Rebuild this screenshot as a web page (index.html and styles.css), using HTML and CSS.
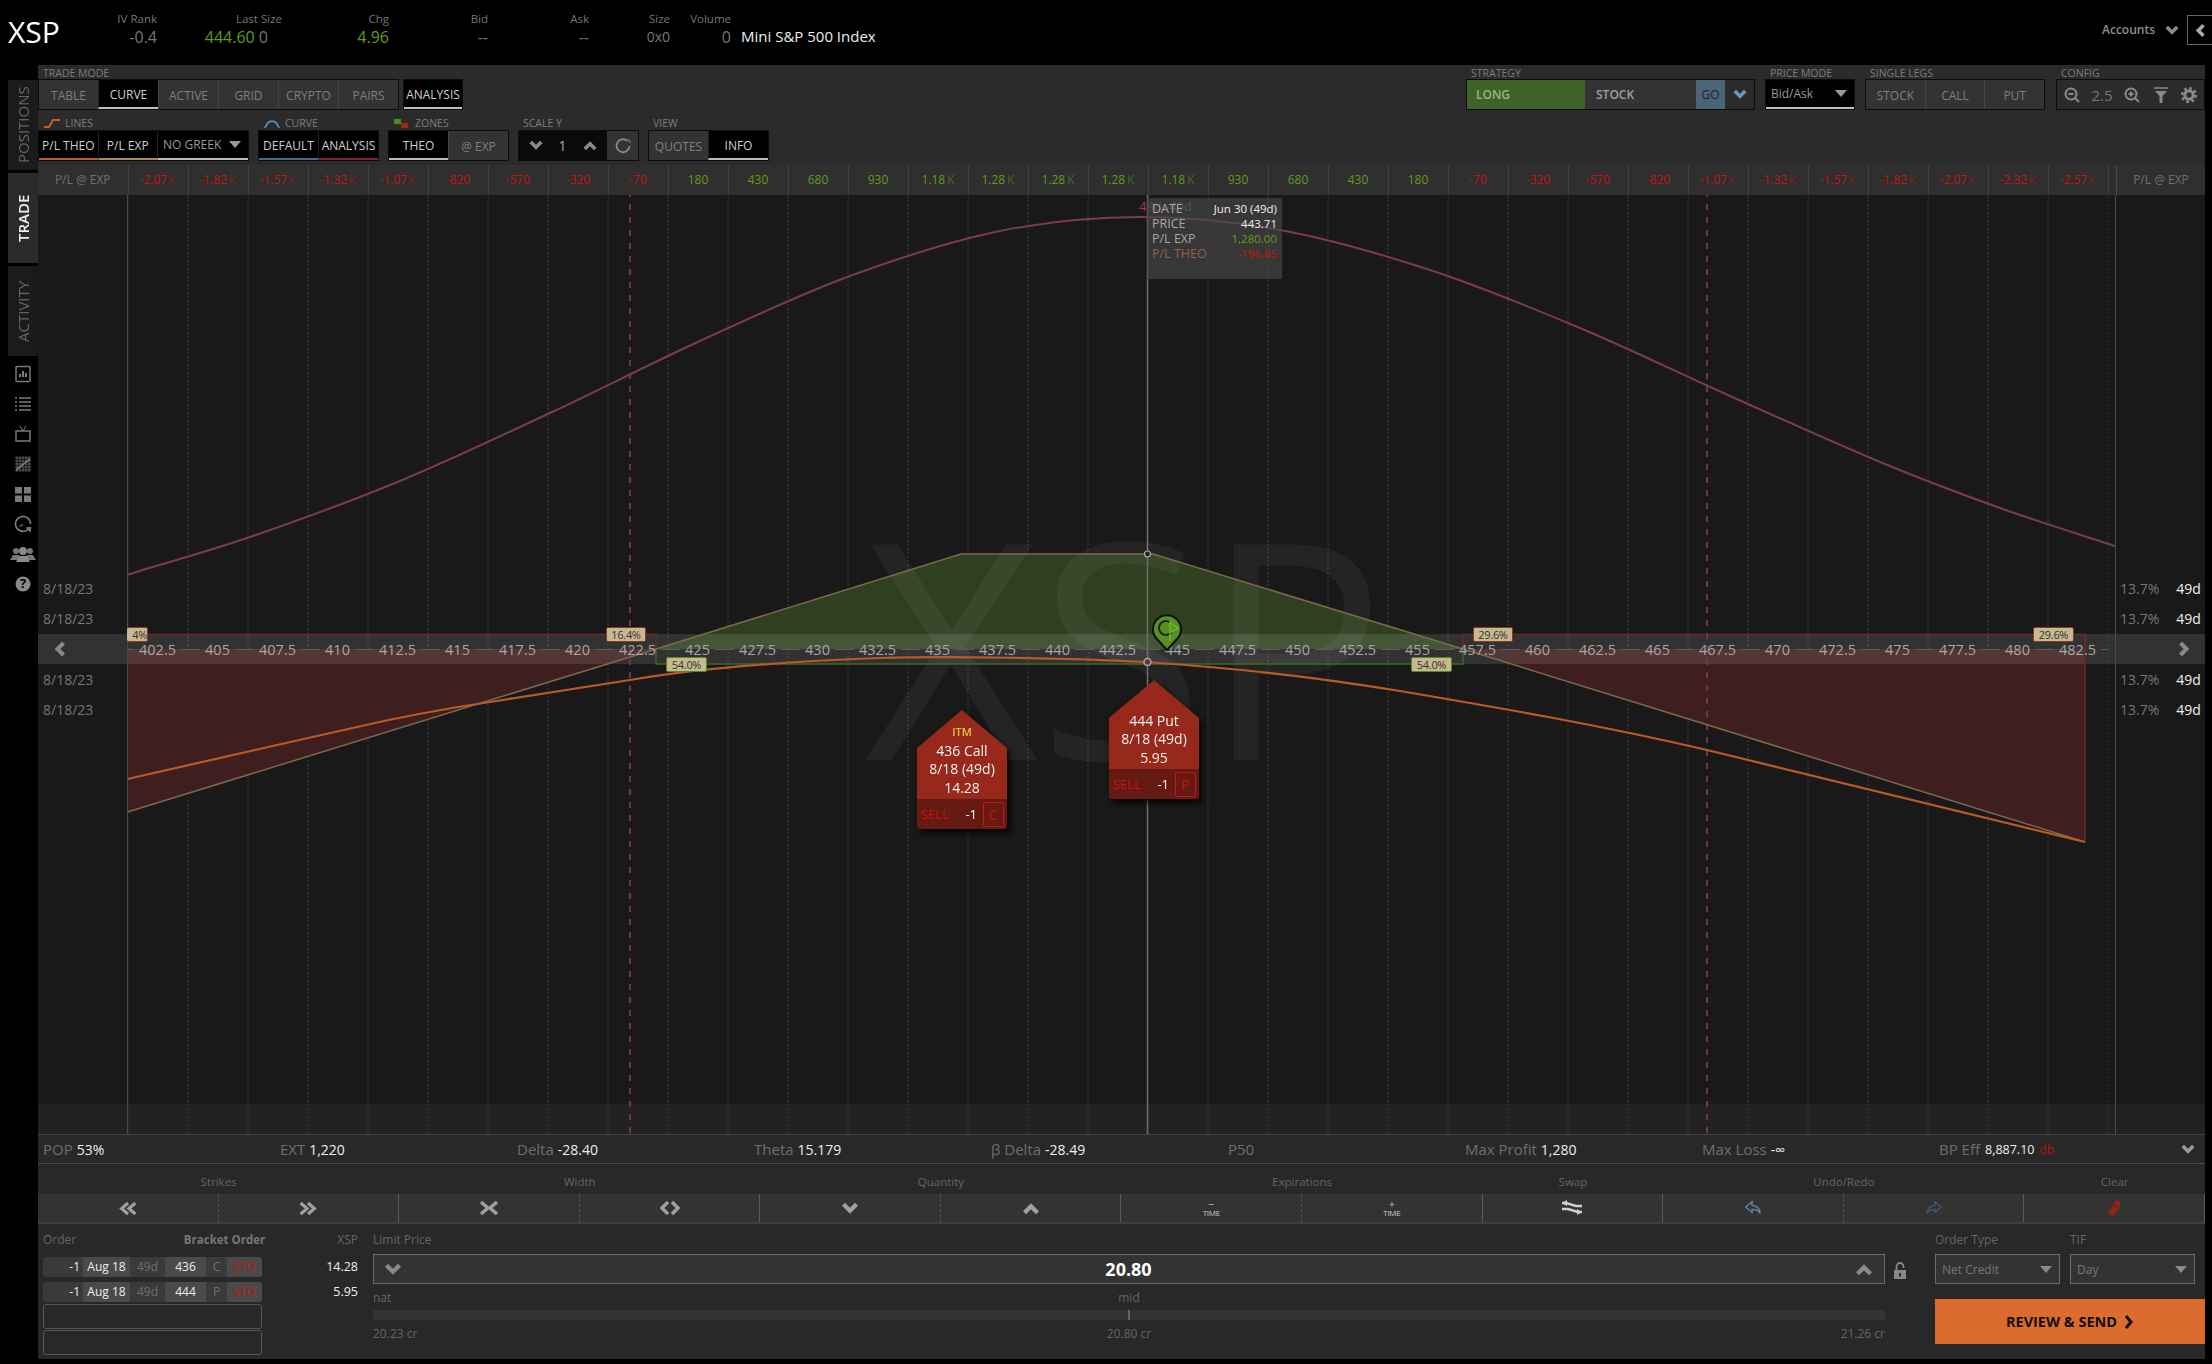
FILE: index.html
```html
<!DOCTYPE html>
<html lang="en">
<head>
  <meta charset="UTF-8" />
  <title>XSP - Trade</title>
  <link rel="stylesheet" href="styles.css">
</head>
<body>

  <svg class="sprites" width="0" height="0">
    <symbol id="chev" viewBox="0 0 16 12"><path d="M2 2l6 6 6-6" fill="none" stroke="currentColor" stroke-width="4"/></symbol>
    <symbol id="chev2" viewBox="0 0 24 16"><path d="M12 2L5 8l7 6M20 2l-7 6 7 6" fill="none" stroke="currentColor" stroke-width="3.4"/></symbol>
  </svg>

  <!-- Quote header -->
  <header class="quote">
    <div class="symbol">XSP</div>
    <div class="q q-iv"><span class="q-label">IV Rank</span><span class="q-val">-0.4</span></div>
    <div class="q q-last"><span class="q-label">Last Size</span><span class="q-val q-pad"><b class="up">444.60</b> 0</span></div>
    <div class="q q-chg"><span class="q-label">Chg</span><span class="q-val up">4.96</span></div>
    <div class="q q-bid"><span class="q-label">Bid</span><span class="q-val">--</span></div>
    <div class="q q-ask"><span class="q-label">Ask</span><span class="q-val">--</span></div>
    <div class="q q-size"><span class="q-label">Size</span><span class="q-val q-small">0x0</span></div>
    <div class="q q-vol"><span class="q-label">Volume</span><span class="q-val">0</span></div>
    <div class="desc">Mini S&amp;P 500 Index</div>
    <div class="accounts">Accounts <svg class="ic-chev"><use href="#chev"/></svg></div>
    <div class="collapse"><svg class="ic-chev rot-left"><use href="#chev"/></svg></div>
  </header>

  <div class="shell">
    <!-- Left side tabs and icons -->
    <nav class="side">
      <div class="vtab">POSITIONS</div>
      <div class="vtab active">TRADE</div>
      <div class="vtab">ACTIVITY</div>
      <div class="side-icons">
        <svg viewBox="0 0 18 18"><rect x="2" y="1.5" width="14" height="15" rx="1" fill="none" stroke="#7a7a7a" stroke-width="1.5"/><path d="M5 12V9h2v3zM8 12V6h2v6zM11 12V8h2v4z" fill="#7a7a7a"/></svg>
        <svg viewBox="0 0 18 18"><path d="M1 3h2M5 3h12M1 7h2M5 7h12M1 11h2M5 11h12M1 15h2M5 15h12" stroke="#7a7a7a" stroke-width="1.6"/></svg>
        <svg viewBox="0 0 18 18"><rect x="2" y="6" width="14" height="10" fill="none" stroke="#7a7a7a" stroke-width="1.5"/><path d="M6 1l3 5 3-5" fill="none" stroke="#7a7a7a"/></svg>
        <svg viewBox="0 0 18 18"><path d="M1 3h16M1 6h16M1 9h16M1 12h16M1 15h16M3 1v16M6 1v16M9 1v16M12 1v16M15 1v16" stroke="#666" stroke-width=".9"/><path d="M2 15l14-11" stroke="#888" stroke-width="1.5"/></svg>
        <svg viewBox="0 0 18 18"><path d="M1 2h7v6.500H1zM10 2h7v6.500h-7zM1 10.500h7V17H1zM10 10.500h7V17h-7z" fill="#7a7a7a"/></svg>
        <svg viewBox="0 0 18 18"><path d="M14.500 14A7.500 7.500 0 1 1 16.500 9" fill="none" stroke="#7a7a7a" stroke-width="1.6"/><path d="M9 9.500l-3.500 2M13 13l3 3.200 .5-3.700z" stroke="#7a7a7a" stroke-width="1.300" fill="#7a7a7a"/></svg>
        <svg class="wide" viewBox="0 0 26 18"><circle cx="6" cy="6" r="3" fill="#777"/><circle cx="20" cy="6" r="3" fill="#777"/><path d="M0 15l3-5h6l3 5zM14 15l3-5h6l3 5z" fill="#777"/><circle cx="13" cy="6" r="4" fill="#8a8a8a"/><path d="M6 17l3-6h8l3 6z" fill="#8a8a8a"/></svg>
        <svg viewBox="0 0 18 18"><circle cx="9" cy="9" r="7.500" fill="#8a8a8a"/><text x="9" y="13" class="help-mark">?</text></svg>
      </div>
    </nav>

    <main class="main">
      <!-- Toolbar -->
      <section class="toolbar">
        <div class="tool-row">
          <div class="group">
            <div class="group-label">TRADE MODE</div>
            <div class="seg w-trade">
              <div class="btn">TABLE</div>
              <div class="btn on">CURVE</div>
              <div class="btn">ACTIVE</div>
              <div class="btn">GRID</div>
              <div class="btn">CRYPTO</div>
              <div class="btn">PAIRS</div>
            </div>
          </div>
          <div class="group analysis">
            <div class="group-label">&nbsp;</div>
            <div class="seg w-60"><div class="btn on">ANALYSIS</div></div>
          </div>
          <div class="spacer"></div>
          <div class="group">
            <div class="group-label">STRATEGY</div>
            <div class="seg strategy">
              <div class="st-long">LONG</div>
              <div class="st-stock">STOCK</div>
              <div class="st-go">GO</div>
              <div class="st-more"><svg class="ic-chev blue"><use href="#chev"/></svg></div>
            </div>
          </div>
          <div class="group">
            <div class="group-label">PRICE MODE</div>
            <div class="seg w-price"><div class="btn on drop"><span>Bid/Ask</span><i class="tri"></i></div></div>
          </div>
          <div class="group">
            <div class="group-label">SINGLE LEGS</div>
            <div class="seg w-legs">
              <div class="btn">STOCK</div>
              <div class="btn">CALL</div>
              <div class="btn">PUT</div>
            </div>
          </div>
          <div class="group group-config">
            <div class="group-label">CONFIG</div>
            <div class="seg config">
              <svg viewBox="0 0 18 18"><circle cx="8" cy="8" r="5.500" fill="none" stroke="#8a8a8a" stroke-width="2"/><path d="M5.500 8h5M12 12l4 4" stroke="#8a8a8a" stroke-width="2"/></svg>
              <span>2.5</span>
              <svg viewBox="0 0 18 18"><circle cx="8" cy="8" r="5.500" fill="none" stroke="#8a8a8a" stroke-width="2"/><path d="M5.500 8h5M8 5.500v5M12 12l4 4" stroke="#8a8a8a" stroke-width="2"/></svg>
              <svg viewBox="0 0 18 18"><path d="M2 2h14" stroke="#8a8a8a" stroke-width="1.500"/><path d="M3 5h12l-4.500 5v7h-3v-7z" fill="#8a8a8a"/></svg>
              <svg viewBox="0 0 18 18"><circle cx="9" cy="9" r="4.200" fill="none" stroke="#8a8a8a" stroke-width="3"/><circle cx="9" cy="9" r="6.800" fill="none" stroke="#8a8a8a" stroke-width="2.600" stroke-dasharray="2.700 2.640"/></svg>
            </div>
          </div>
        </div>

        <div class="tool-row row-two">
          <div class="group">
            <div class="group-label"><svg class="mini" viewBox="0 0 18 10"><path d="M1 9h5l4-7h7" fill="none" stroke="#c2602a" stroke-width="2"/></svg>LINES</div>
            <div class="seg dark w-lines">
              <div class="btn on line-theo">P/L THEO</div>
              <div class="btn on line-exp">P/L EXP</div>
              <div class="btn on drop w-greek"><span>NO GREEK</span><i class="tri"></i></div>
            </div>
          </div>
          <div class="group">
            <div class="group-label"><svg class="mini" viewBox="0 0 18 10"><path d="M2 10C5 1 13 1 16 10" fill="none" stroke="#5e86a8" stroke-width="2"/></svg>CURVE</div>
            <div class="seg dark w-121">
              <div class="btn on line-def">DEFAULT</div>
              <div class="btn on line-ana">ANALYSIS</div>
            </div>
          </div>
          <div class="group">
            <div class="group-label"><svg class="mini" viewBox="0 0 18 10"><path d="M1 1h7v5H1z" fill="#4f8a1f"/><path d="M8 5h7v5H8z" fill="#9a2a1c"/></svg>ZONES</div>
            <div class="seg w-121">
              <div class="btn on">THEO</div>
              <div class="btn">@ EXP</div>
            </div>
          </div>
          <div class="group">
            <div class="group-label">SCALE Y</div>
            <div class="seg scale">
              <div class="sc-cell"><svg class="ic-chev"><use href="#chev"/></svg></div>
              <div class="sc-cell sc-num">1</div>
              <div class="sc-cell"><svg class="ic-chev rot-up"><use href="#chev"/></svg></div>
              <div class="sc-reset"><svg viewBox="0 0 18 18"><path d="M13.500 4A6.500 6.500 0 1 0 15.500 9" fill="none" stroke="#888" stroke-width="1.800"/><path d="M11 3h5v4" fill="none" stroke="#888" stroke-width="1.200" stroke-dasharray="2 1"/></svg></div>
            </div>
          </div>
          <div class="group">
            <div class="group-label">VIEW</div>
            <div class="seg w-121">
              <div class="btn">QUOTES</div>
              <div class="btn on">INFO</div>
            </div>
          </div>
        </div>
      </section>

      <!-- P/L at expiration row -->
      <section class="pl-row">
        <div class="pl-side">P/L @ EXP</div>
        <div class="pl dn">-2.07<i>K</i></div><div class="pl dn">-1.82<i>K</i></div><div class="pl dn">-1.57<i>K</i></div>
        <div class="pl dn">-1.32<i>K</i></div><div class="pl dn">-1.07<i>K</i></div><div class="pl dn">-820</div>
        <div class="pl dn">-570</div><div class="pl dn">-320</div><div class="pl dn">-70</div>
        <div class="pl gr">180</div><div class="pl gr">430</div><div class="pl gr">680</div><div class="pl gr">930</div>
        <div class="pl gr">1.18<i>K</i></div><div class="pl gr">1.28<i>K</i></div><div class="pl gr">1.28<i>K</i></div>
        <div class="pl gr">1.28<i>K</i></div><div class="pl gr">1.18<i>K</i></div><div class="pl gr">930</div>
        <div class="pl gr">680</div><div class="pl gr">430</div><div class="pl gr">180</div>
        <div class="pl dn">-70</div><div class="pl dn">-320</div><div class="pl dn">-570</div><div class="pl dn">-820</div>
        <div class="pl dn">-1.07<i>K</i></div><div class="pl dn">-1.32<i>K</i></div><div class="pl dn">-1.57<i>K</i></div>
        <div class="pl dn">-1.82<i>K</i></div><div class="pl dn">-2.07<i>K</i></div><div class="pl dn">-2.32<i>K</i></div>
        <div class="pl dn">-2.57<i>K</i></div>
        <div class="pl-gap"></div>
        <div class="pl-side pl-right">P/L @ EXP</div>
      </section>

      <!-- Curve chart -->
      <section class="chart">
        <svg class="plot" width="2167" height="939" viewBox="38 195 2167 939">
          <defs>
            <pattern id="gridv" x="127.500" y="0" width="60" height="4" patternUnits="userSpaceOnUse">
              <rect x="0" y="0" width="1" height="2" fill="#3c3c3c"/>
            </pattern>
          </defs>
          <rect x="38" y="1104" width="2167" height="30" fill="#222"/>
          <rect x="127.500" y="195" width="1981" height="939" fill="url(#gridv)"/>
          <path d="M127 649H656L127 812z" fill="#3e1e1e"/>
          <path d="M1463 649H2085V842z" fill="#3e1e1e"/>
          <path d="M656 649L961 554H1153L1463 649z" fill="#2e4020"/>
          <text x="1125" y="760" class="watermark">XSP</text>
          <rect x="38" y="634" width="2167" height="30" fill="#fff" fill-opacity=".11"/>
          <path d="M127 634.500H656V649M2085 842V634.500H1463V649" fill="none" stroke="#6b2a2a" stroke-width="1.500"/>
          <path d="M656 649V664H1463V649" fill="none" stroke="#3f6a22" stroke-width="1.500"/>
          <path d="M630 165V1134M1707 165V1134" stroke="#7a3050" stroke-width="2" stroke-dasharray="6 7"/>
          <path d="M127.500 195V1134M2115.500 195V1134" stroke="#4a4a4a"/>
          <path d="M1147.500 195V1134" stroke="#6e6e6e" stroke-width="1.500"/>
          <path class="ln-prob" d="M127 575C147 568 204.500 552.700 250 537S350 501.700 400 481S500 436.300 550 413S650 363.800 700 341S800 294.300 850 276S951.700 240.800 1000 231S1093.300 217.200 1140 217S1231.700 221.200 1280 230S1380 253.700 1430 270S1530 307 1580 328S1680 373.700 1730 396S1835 443.300 1880 462S1960.800 494 2000 508S2085 536 2115 546"/>
          <path class="ln-exp" d="M127.500 812L656 649L961 554H1153L1463 649L2085 842"/>
          <path class="ln-theo" d="M127.500 779L255 750L357 727C400 717 450 708 490 702L630 680C700 668 800 661 880 658C950 656 1060 658 1147 662C1240 669 1300 675 1400 691C1500 708 1600 725 1707 750L2085 842"/>
          <circle cx="1147.500" cy="554" r="3" fill="#222" stroke="#aaa" stroke-width="1.200"/>
          <circle cx="1147.500" cy="662" r="3.500" fill="#444" stroke="#c49a85" stroke-width="1.500"/>
        </svg>

        <div class="dates dates-top"><span>8/18/23</span><span>8/18/23</span></div>
        <div class="dates dates-bot"><span>8/18/23</span><span>8/18/23</span></div>
        <div class="vols vols-top"><div><span>13.7%</span><b>49d</b></div><div><span>13.7%</span><b>49d</b></div></div>
        <div class="vols vols-bot"><div><span>13.7%</span><b>49d</b></div><div><span>13.7%</span><b>49d</b></div></div>

        <div class="strike-band">
          <div class="band-arrow"><svg class="ic-chev rot-left"><use href="#chev"/></svg></div>
          <div class="st"><span>402.5</span></div><div class="st"><span>405</span></div><div class="st"><span>407.5</span></div>
          <div class="st"><span>410</span></div><div class="st"><span>412.5</span></div><div class="st"><span>415</span></div>
          <div class="st"><span>417.5</span></div><div class="st"><span>420</span></div><div class="st"><span>422.5</span></div>
          <div class="st"><span>425</span></div><div class="st"><span>427.5</span></div><div class="st"><span>430</span></div>
          <div class="st"><span>432.5</span></div><div class="st"><span>435</span></div><div class="st"><span>437.5</span></div>
          <div class="st"><span>440</span></div><div class="st"><span>442.5</span></div><div class="st"><span>445</span></div>
          <div class="st"><span>447.5</span></div><div class="st"><span>450</span></div><div class="st"><span>452.5</span></div>
          <div class="st"><span>455</span></div><div class="st"><span>457.5</span></div><div class="st"><span>460</span></div>
          <div class="st"><span>462.5</span></div><div class="st"><span>465</span></div><div class="st"><span>467.5</span></div>
          <div class="st"><span>470</span></div><div class="st"><span>472.5</span></div><div class="st"><span>475</span></div>
          <div class="st"><span>477.5</span></div><div class="st"><span>480</span></div><div class="st"><span>482.5</span></div>
          <div class="band-arrow band-right"><svg class="ic-chev rot-right"><use href="#chev"/></svg></div>
        </div>

        <div class="badge badge-red b-a">4%</div>
        <div class="badge badge-red b-b">16.4%</div>
        <div class="badge badge-green b-c">54.0%</div>
        <div class="badge badge-green b-d">54.0%</div>
        <div class="badge badge-red b-e">29.6%</div>
        <div class="badge badge-red b-f">29.6%</div>

        <svg class="pin" viewBox="0 0 32 40">
          <path d="M16 38L5 26A14 14 0 1 1 27 26z" fill="#5a8f28" stroke="#111" stroke-width="2"/>
          <circle cx="15" cy="16" r="7" fill="none" stroke="#1a2a10" stroke-width="2"/>
          <path d="M19 9v20M19 10l8 6-8 5" fill="#5a9a20" stroke="#72c020" stroke-width="1.300"/>
        </svg>

        <span class="ghost ghost-a">49d</span>
        <span class="ghost ghost-b">49d</span>
        <div class="tip">
          <div class="tip-row"><span>DATE</span><b class="t-white">Jun 30 (49d)</b></div>
          <div class="tip-row"><span>PRICE</span><b class="t-white">443.71</b></div>
          <div class="tip-row"><span>P/L EXP</span><b class="t-green">1,280.00</b></div>
          <div class="tip-row t-theo"><span>P/L THEO</span><b class="t-red">-196.85</b></div>
        </div>

        <div class="tag tag-call">
          <div class="tag-body">
            <span class="itm">ITM</span><span>436 Call</span><span>8/18 (49d)</span><span>14.28</span>
          </div>
          <div class="tag-bar"><span class="sell">SELL</span><span class="qty">-1</span><span class="kind">C</span></div>
        </div>
        <div class="tag tag-put">
          <div class="tag-body">
            <span>444 Put</span><span>8/18 (49d)</span><span>5.95</span>
          </div>
          <div class="tag-bar"><span class="sell">SELL</span><span class="qty">-1</span><span class="kind">P</span></div>
        </div>
      </section>

      <!-- Stats -->
      <section class="stats">
        <div><span>POP</span> <b>53%</b></div>
        <div><span>EXT</span> <b>1,220</b></div>
        <div><span>Delta</span> <b>-28.40</b></div>
        <div><span>Theta</span> <b>15.179</b></div>
        <div><span>β Delta</span> <b>-28.49</b></div>
        <div><span>P50</span></div>
        <div><span>Max Profit</span> <b>1,280</b></div>
        <div><span>Max Loss</span> <b>-∞</b></div>
        <div class="stat-last"><span>BP Eff</span> <b>8,887.10</b> <em>db</em><svg class="ic-chev"><use href="#chev"/></svg></div>
      </section>

      <!-- Adjust buttons -->
      <section class="adjust">
        <div class="adj-labels">
          <div class="span2">Strikes</div><div class="span2">Width</div><div class="span2">Quantity</div>
          <div class="span2">Expirations</div><div>Swap</div><div class="span2">Undo/Redo</div><div>Clear</div>
        </div>
        <div class="adj-btns">
          <div class="ab"><svg class="i-24"><use href="#chev2"/></svg></div>
          <div class="ab end"><svg class="i-24 flip"><use href="#chev2"/></svg></div>
          <div class="ab"><svg viewBox="0 0 22 16" class="i-22"><path d="M3 2l7 6-7 6M19 2l-7 6 7 6" fill="none" stroke="currentColor" stroke-width="3.400"/></svg></div>
          <div class="ab end"><svg viewBox="0 0 22 16" class="i-22"><path d="M9 2L3 8l6 6M13 2l6 6-6 6" fill="none" stroke="currentColor" stroke-width="3.400"/></svg></div>
          <div class="ab"><svg class="ic-chev big"><use href="#chev"/></svg></div>
          <div class="ab end"><svg class="ic-chev big rot-up"><use href="#chev"/></svg></div>
          <div class="ab"><div class="time"><i>−</i><span>TIME</span></div></div>
          <div class="ab end"><div class="time"><i>+</i><span>TIME</span></div></div>
          <div class="ab end"><svg viewBox="0 0 26 18" class="i-26"><path d="M3 4h4l10 3h6M23 13h-4L9 10H3" fill="none" stroke="#cfcfcf" stroke-width="2.400"/><path d="M8 1L3 4l5 3zM18 10l5 3-5 3z" fill="#cfcfcf"/></svg></div>
          <div class="ab"><svg viewBox="0 0 20 18" class="i-20"><path d="M9 2L2 8l7 6v-3.500c4 0 7 1 9 4.500-.5-5.500-4-8.500-9-9z" fill="none" stroke="#5e8cb5" stroke-width="1.400"/></svg></div>
          <div class="ab end"><svg viewBox="0 0 20 18" class="i-20"><path d="M11 2l7 6-7 6v-3.500c-4 0-7 1-9 4.500.5-5.500 4-8.500 9-9z" fill="none" stroke="#3e5a75" stroke-width="1.400"/></svg></div>
          <div class="ab last"><svg viewBox="0 0 18 20" class="i-20"><path d="M12 1l4 3-2 8-6 7-5-3-1-3z" fill="#8f261c"/><path d="M3 13l6-6 4 3" fill="none" stroke="#3a1410" stroke-width=".8"/></svg></div>
        </div>
      </section>

      <!-- Order ticket -->
      <section class="ticket">
        <div class="legs">
          <div class="legs-head"><span class="t-label">Order</span><b class="bracket">Bracket Order</b><span class="t-label xsp">XSP</span></div>
          <div class="leg-line">
            <div class="leg"><span class="lq">-1</span><span class="lexp">Aug 18</span><span class="ldte">49d</span><span class="lstk">436</span><span class="lcp">C</span><span class="lsto">STO</span></div>
            <span class="lprice">14.28</span>
          </div>
          <div class="leg-line">
            <div class="leg"><span class="lq">-1</span><span class="lexp">Aug 18</span><span class="ldte">49d</span><span class="lstk">444</span><span class="lcp">P</span><span class="lsto">STO</span></div>
            <span class="lprice">5.95</span>
          </div>
          <div class="leg-empty"></div>
          <div class="leg-empty"></div>
        </div>

        <div class="limit">
          <div class="t-label">Limit Price</div>
          <div class="limit-box">
            <svg class="ic-chev big"><use href="#chev"/></svg>
            <strong>20.80</strong>
            <svg class="ic-chev big rot-up"><use href="#chev"/></svg>
          </div>
          <div class="limit-marks"><span>nat</span><span>mid</span><span class="blank">x</span></div>
          <div class="limit-bar"><i></i></div>
          <div class="limit-marks low"><span>20.23 cr</span><span>20.80 cr</span><span>21.26 cr</span></div>
        </div>

        <div class="lock">
          <svg viewBox="0 0 14 18"><path d="M3.500 8V4.500a3.500 3.500 0 0 1 7 0V6" fill="none" stroke="#888" stroke-width="1.800"/><rect x="1" y="8" width="12" height="9" fill="#888"/><rect x="6" y="11" width="2" height="3.500" fill="#2a2a2a"/></svg>
        </div>

        <div class="send">
          <div class="send-fields">
            <div class="field"><div class="t-label">Order Type</div><div class="select"><span>Net Credit</span><i class="tri"></i></div></div>
            <div class="field"><div class="t-label">TIF</div><div class="select"><span>Day</span><i class="tri"></i></div></div>
          </div>
          <div class="review">REVIEW &amp; SEND <svg viewBox="0 0 10 14"><path d="M2 1l5 6-5 6" fill="none" stroke="#111" stroke-width="3"/></svg></div>
        </div>
      </section>
    </main>
  </div>

</body>
</html>
```

FILE: styles.css
```css
* {
  box-sizing: border-box;
}

html, body {
  margin: 0;
  height: 100%;
}

body {
  background: #000;
  color: #888;
  font-family: "Open Sans", "Liberation Sans", sans-serif;
  font-size: 12px;
  width: 2212px;
  height: 1364px;
  overflow: hidden;
}

.sprites {
  position: absolute;
}

b, strong {
  font-weight: 400;
}

/* shared icons */
.ic-chev {
  width: 14px;
  height: 11px;
  color: #8a8a8a;
  display: block;
}
.ic-chev.big {
  width: 18px;
  height: 13px;
  color: #a0a0a0;
}
.ic-chev.blue {
  color: #5e9cc8;
}
.rot-up {
  transform: rotate(180deg);
}
.rot-left {
  transform: rotate(90deg);
}
.rot-right {
  transform: rotate(-90deg);
}
.tri {
  display: block;
  width: 0;
  height: 0;
  border-left: 6px solid transparent;
  border-right: 6px solid transparent;
  border-top: 7px solid #999;
}

/* quote header */
.quote {
  height: 65px;
  display: flex;
  padding-left: 8px;
  align-items: flex-start;
}
.symbol {
  width: 80px;
  font-size: 30px;
  line-height: 32px;
  margin-top: 16px;
  color: #fff;
}
.q {
  display: flex;
  flex-direction: column;
  align-items: flex-end;
  padding-top: 12px;
}
.q-label {
  font-size: 11.5px;
  line-height: 14px;
  color: #777;
}
.q-val {
  font-size: 16px;
  line-height: 22px;
  color: #777;
}
.q-val b {
  font-weight: 400;
}
.q-pad {
  padding-right: 14px;
}
.q-small {
  font-size: 14px;
}
.up {
  color: #5f9e1a;
}
.q-iv { width: 69px; }
.q-last { width: 125px; }
.q-chg { width: 107px; }
.q-bid { width: 99px; }
.q-ask { width: 101px; }
.q-size { width: 81px; }
.q-vol { width: 61px; }
.desc {
  margin: 25px 0 0 10px;
  font-size: 15px;
  line-height: 22px;
  color: #eee;
}
.accounts {
  margin: 20px 0 0 auto;
  font-size: 12px;
  font-weight: 600;
  line-height: 20px;
  color: #8f8f8f;
  display: flex;
  align-items: center;
  gap: 10px;
}
.collapse {
  width: 25px;
  height: 30px;
  margin: 15px 0 0 8px;
  border: 1px solid #666;
  border-right: 0;
  display: flex;
  align-items: center;
  justify-content: center;
}
.collapse .ic-chev {
  color: #aaa;
}

/* layout shell */
.shell {
  display: flex;
  height: 1294px;
}
.side {
  width: 38px;
  padding: 15px 0 0 8px;
  flex: none;
}
.vtab {
  width: 30px;
  height: 90px;
  background: #1b1b1b;
  color: #666;
  font-size: 15px;
  writing-mode: vertical-rl;
  transform: rotate(180deg);
  display: flex;
  align-items: center;
  justify-content: center;
  margin-bottom: 3px;
}
.vtab.active {
  background: #2b2b2b;
  color: #eee;
  font-weight: 600;
}
.side-icons {
  display: flex;
  flex-direction: column;
  align-items: center;
  gap: 12px;
  margin: 9px 0 0 -8px;
  width: 46px;
}
.side-icons svg {
  width: 18px;
  height: 18px;
  display: block;
}
.side-icons svg.wide {
  width: 26px;
}
.help-mark {
  font-size: 13px;
  font-weight: 700;
  fill: #000;
  text-anchor: middle;
}

.main {
  width: 2167px;
  background: #282828;
  display: flex;
  flex-direction: column;
}

/* toolbar */
.toolbar {
  height: 100px;
  background: #2b2b2b;
}
.tool-row {
  display: flex;
  gap: 10px;
  height: 45px;
}
.row-two {
  gap: 9px;
  margin-top: 6px;
  height: 49px;
}
.row-two .group-label {
  padding-top: 0;
}
.analysis {
  margin-left: -6px;
}
.group-config {
  margin-left: 1px;
}
.spacer {
  flex: 1;
}
.group-label {
  height: 14px;
  font-size: 10.5px;
  line-height: 14px;
  padding: 2px 0 0 5px;
  color: #7d7d7d;
  display: flex;
  align-items: center;
  gap: 4px;
  white-space: nowrap;
}
.mini {
  width: 18px;
  height: 10px;
}
.seg {
  display: flex;
  height: 31px;
  border: 1px solid #0c0c0c;
}
.w-trade { width: 361px; }
.w-60 { width: 60px; }
.w-price { width: 90px; }
.w-legs { width: 180px; }
.w-lines { width: 211px; }
.w-121 { width: 121px; }
.btn {
  flex: 1;
  min-width: 0;
  padding-top: 2px;
  background: #333;
  color: #7f7f7f;
  border-left: 1px solid #444;
  font-size: 12px;
  display: flex;
  align-items: center;
  justify-content: center;
  white-space: nowrap;
}
.btn:first-child {
  border-left: 0;
}
.btn.on {
  background: #000;
  color: #cfcfcf;
  border-left-color: #222;
  border-bottom: 2px solid #bdbdbd;
}
.drop {
  justify-content: space-between;
  padding: 0 7px 0 5px;
}
.w-price .btn {
  color: #999;
}
.w-greek {
  flex: none;
  width: 91px;
  color: #999 !important;
}
.line-theo {
  border-bottom-color: #b5602b !important;
}
.line-exp {
  border-bottom-color: #a08c60 !important;
}
.line-def {
  border-bottom-color: #4e6a80 !important;
}
.line-ana {
  border-bottom-color: #7f2433 !important;
}
.strategy {
  width: 289px;
  font-size: 12px;
  font-weight: 600;
}
.st-long {
  width: 118px;
  background: #3d6327;
  color: #9ab58a;
  display: flex;
  align-items: center;
  padding-left: 9px;
}
.st-stock {
  width: 111px;
  background: #333;
  color: #a0a0a0;
  display: flex;
  align-items: center;
  padding-left: 11px;
}
.st-go {
  width: 29px;
  background: #4a6478;
  color: #222;
  font-weight: 400;
  display: flex;
  align-items: center;
  justify-content: center;
}
.st-more {
  flex: 1;
  display: flex;
  align-items: center;
  justify-content: center;
}
.config {
  width: 149px;
  align-items: center;
  justify-content: space-between;
  padding: 0 6px 0 6px;
  font-size: 15px;
  color: #777;
}
.config svg {
  width: 18px;
  height: 18px;
}
.scale {
  width: 121px;
  padding-left: 3px;
  background: #0a0a0a;
}
.sc-cell {
  width: 27px;
  display: flex;
  align-items: center;
  justify-content: center;
  font-size: 14px;
  color: #aaa;
}
.sc-reset {
  width: 31px;
  margin-left: auto;
  background: #333;
  display: flex;
  align-items: center;
  justify-content: center;
}
.sc-reset svg {
  width: 18px;
  height: 18px;
}

/* P/L row */
.pl-row {
  height: 30px;
  display: flex;
  background: #2f2f2f;
  font-size: 12px;
  line-height: 30px;
  text-align: center;
}
.pl-side {
  width: 89.500px;
  color: #6f6f6f;
}
.pl-right {
  flex: 1;
  border-left: 1px solid #4a4a4a;
}
.pl {
  width: 60px;
  border-left: 1px solid #404040;
}
.pl i {
  font-style: normal;
  margin-left: 2px;
  opacity: .55;
}
.pl-gap {
  width: 8.500px;
  border-left: 1px solid #404040;
}
.dn {
  color: #c4160e;
}
.gr {
  color: #5f9e1a;
}

/* chart */
.chart {
  height: 939px;
  position: relative;
  background: #191919;
}
.plot {
  position: absolute;
  left: 0;
  top: 0;
}
.watermark {
  font-size: 302px;
  font-weight: 400;
  fill: #fff;
  fill-opacity: .05;
  text-anchor: middle;
}
.ln-prob {
  fill: none;
  stroke: #7d3a58;
  stroke-width: 2;
}
.ln-exp {
  fill: none;
  stroke: #7d6a4a;
  stroke-width: 1.500;
}
.ln-theo {
  fill: none;
  stroke: #b95a27;
  stroke-width: 2.200;
}
.dates, .vols {
  position: absolute;
  font-size: 14px;
  line-height: 30px;
  color: #777;
  display: flex;
  flex-direction: column;
}
.dates {
  left: 5px;
}
.dates-top {
  top: 379px;
}
.dates-bot {
  top: 470px;
}
.vols {
  left: 2082px;
}
.vols-top {
  top: 379px;
}
.vols-bot {
  top: 470px;
}
.vols div {
  display: flex;
  gap: 17px;
}
.vols b {
  color: #f0f0f0;
}

.strike-band {
  position: absolute;
  left: 0;
  right: 0;
  top: 439px;
  height: 30px;
  display: flex;
  font-size: 14.500px;
  color: #a8a8a8;
}
.band-arrow {
  width: 89.500px;
  display: flex;
  align-items: center;
  padding-left: 13px;
}
.band-right {
  flex: 1;
  width: auto;
  justify-content: flex-end;
  padding: 0 12px 0 0;
}
.band-arrow .ic-chev {
  width: 17px;
  height: 12px;
}
.st {
  width: 60px;
  display: flex;
  align-items: center;
  gap: 5px;
}
.st::before, .st::after {
  content: "";
  flex: 1;
  height: 1px;
  background: #5c5c5c;
}

.badge {
  position: absolute;
  height: 15px;
  font-size: 11px;
  line-height: 13px;
  padding: 0 3px;
  text-align: center;
  color: #333;
  background: #c7b98e;
  border: 1px solid #8a3a2a;
  border-radius: 2px;
  letter-spacing: -.3px;
}
.badge-green {
  border-color: #4f8a2a;
}
.b-a { left: 89px; top: 432px; width: 21px; padding: 0; text-align: right; border-left: 0; }
.b-b { left: 568px; top: 432px; width: 40px; }
.b-c { left: 628px; top: 462px; width: 41px; }
.b-d { left: 1373px; top: 462px; width: 41px; }
.b-e { left: 1435px; top: 432px; width: 40px; }
.b-f { left: 1995px; top: 432px; width: 41px; }

.pin {
  position: absolute;
  left: 1113px;
  top: 417px;
  width: 32px;
  height: 40px;
}

.ghost {
  position: absolute;
  top: 3px;
  font-size: 13px;
  line-height: 16px;
}
.ghost-a {
  left: 1101px;
  color: #a3345d;
}
.ghost-b {
  left: 1131px;
  color: #4f6f88;
}
.tip {
  position: absolute;
  left: 1109px;
  top: 3px;
  width: 135px;
  height: 81px;
  padding: 3px 5px;
  background: rgba(72, 72, 72, .65);
  font-size: 12.500px;
  line-height: 15px;
  color: #a8a8a8;
}
.tip-row {
  display: flex;
  justify-content: space-between;
}
.t-white { color: #f0f0f0; font-size: 11.500px; }
.t-green { color: #5f9e1a; font-size: 11.500px; }
.t-red { color: #c4160e; font-size: 11.500px; }
.t-theo span { color: #96604a; }

.tag {
  position: absolute;
  width: 90px;
  height: 119px;
  color: #f0f0f0;
  font-size: 14px;
  filter: drop-shadow(3px 4px 3px rgba(0, 0, 0, .8));
}
.tag-call {
  left: 879px;
  top: 515px;
}
.tag-put {
  left: 1071px;
  top: 485px;
}
.tag-body {
  height: 89px;
  background: #97281c;
  clip-path: polygon(50% 0, 100% 38px, 100% 100%, 0 100%, 0 38px);
  display: flex;
  flex-direction: column;
  justify-content: flex-end;
  align-items: center;
  line-height: 18.500px;
  padding-bottom: 2px;
}
.itm {
  color: #e0c840;
  font-size: 11px;
  font-weight: 600;
}
.tag-bar {
  height: 30px;
  background: #651a13;
  border-radius: 0 0 3px 3px;
  display: flex;
  align-items: center;
  padding: 0 3px 0 4px;
  color: #fff;
}
.sell {
  color: #c8160c;
  font-size: 13px;
}
.qty {
  margin-left: auto;
  font-size: 13px;
}
.kind {
  width: 21px;
  height: 25px;
  margin-left: 6px;
  border: 1px solid #c8160c;
  border-radius: 2px;
  color: #c8160c;
  font-size: 14px;
  text-align: center;
  line-height: 23px;
}

/* stats */
.stats {
  height: 30px;
  border-top: 1px solid #444;
  border-bottom: 1px solid #4a4a4a;
  display: grid;
  grid-template-columns: repeat(8, 237px) 1fr;
  padding-left: 5px;
  align-items: center;
  background: #282828;
  font-size: 15px;
  color: #6f6f6f;
}
.stats b {
  font-size: 14px;
  color: #eee;
}
.stat-last {
  display: flex;
  align-items: center;
  gap: 5px;
}
.stat-last b {
  font-size: 12.500px !important;
}
.stat-last em {
  font-style: normal;
  font-size: 12px;
  color: #b5140d;
}
.stat-last .ic-chev {
  margin: 0 10px 0 auto;
  color: #9a9a9a;
}

/* adjust */
.adjust {
  flex: none;
}
.adj-labels {
  height: 30px;
  display: grid;
  grid-template-columns: repeat(12, 1fr);
  text-align: center;
  font-size: 11.500px;
  line-height: 36px;
  color: #666;
}
.span2 {
  grid-column: span 2;
}
.adj-btns {
  height: 30px;
  display: grid;
  grid-template-columns: repeat(12, 1fr);
  background: #333;
  border-bottom: 2px solid #404040;
  color: #a0a0a0;
}
.ab {
  display: flex;
  align-items: center;
  justify-content: center;
  border-right: 1px dashed #525252;
}
.ab.end, .ab.last {
  border-right: 1px solid #5c5c5c;
}
.i-24 {
  width: 22px;
  height: 15px;
}
.flip {
  transform: scaleX(-1);
}
.i-22 {
  width: 22px;
  height: 16px;
}
.i-26 {
  width: 26px;
  height: 18px;
}
.i-20 {
  width: 18px;
  height: 18px;
}
.time {
  display: flex;
  flex-direction: column;
  align-items: center;
  font-size: 8px;
  line-height: 8px;
  color: #c8c8c8;
}
.time i {
  font-style: normal;
  font-size: 10px;
  line-height: 9px;
}
.time span {
  letter-spacing: -.3px;
}

/* ticket */
.ticket {
  flex: 1;
  display: flex;
  background: #282828;
}
.t-label {
  font-size: 12px;
  line-height: 16px;
  color: #666;
}
.legs {
  width: 335px;
  padding: 8px 0 0 5px;
  flex: none;
}
.legs-head {
  display: flex;
  width: 315px;
  height: 25px;
}
.bracket {
  margin-left: 62px;
  width: 127px;
  text-align: right;
  font-size: 11.500px;
  font-weight: 700;
  color: #777;
  line-height: 16px;
  white-space: nowrap;
}
.xsp {
  margin-left: auto;
}
.leg-line {
  display: flex;
  width: 315px;
  height: 25px;
  align-items: flex-start;
  justify-content: space-between;
}
.leg-line + .leg-line {
  height: 22px;
}
.leg {
  width: 219px;
  height: 20px;
  display: flex;
  font-size: 12px;
  line-height: 20px;
  text-align: center;
  background: #3a3a3a;
  border-radius: 3px;
  overflow: hidden;
  color: #eee;
}
.lq {
  width: 40px;
  text-align: right;
  padding-right: 3px;
}
.lexp {
  width: 47px;
  background: #4a4a4a;
}
.ldte {
  width: 35px;
  color: #6f6f6f;
}
.lstk {
  width: 41px;
  background: #4a4a4a;
}
.lcp {
  width: 21px;
  color: #6f6f6f;
}
.lsto {
  flex: 1;
  background: #4a4a4a;
  color: #c4160e;
}
.lprice {
  font-size: 12.500px;
  line-height: 20px;
  color: #eee;
}
.leg-empty {
  width: 219px;
  height: 25px;
  border: 1px solid #565656;
  border-radius: 3px;
  margin-bottom: 1px;
}

.limit {
  width: 1512px;
  padding-top: 8px;
  flex: none;
}
.limit-box {
  height: 30px;
  margin-top: 6px;
  background: #333;
  border: 1px solid #6a6a6a;
  display: flex;
  align-items: center;
  justify-content: space-between;
  padding: 0 11px 0 10px;
}
.limit-box strong {
  font-size: 18px;
  font-weight: 700;
  color: #fff;
}
.limit-box .ic-chev {
  color: #8a8a8a;
}
.limit-marks {
  display: flex;
  justify-content: space-between;
  height: 26px;
  padding-top: 6px;
  font-size: 12px;
  line-height: 16px;
  color: #666;
}
.limit-marks span {
  width: 100px;
  text-align: center;
}
.limit-marks span:first-child {
  text-align: left;
}
.limit-marks span:last-child {
  text-align: right;
}
.blank {
  visibility: hidden;
}
.limit-bar {
  height: 10px;
  background: #333;
  display: flex;
  justify-content: center;
}
.limit-bar i {
  width: 2px;
  background: #666;
}
.lock {
  width: 50px;
  flex: none;
  padding: 38px 0 0 8px;
}
.lock svg {
  width: 14px;
  height: 18px;
  display: block;
}
.send {
  flex: 1;
  padding-top: 8px;
}
.send-fields {
  display: flex;
  gap: 10px;
}
.field {
  width: 125px;
}
.select {
  height: 30px;
  margin-top: 6px;
  border: 1px solid #6a6a6a;
  background: #333;
  display: flex;
  align-items: center;
  justify-content: space-between;
  padding: 0 7px 0 6px;
  font-size: 12px;
  color: #777;
}
.select .tri {
  border-top-color: #8a8a8a;
}
.review {
  height: 45px;
  margin-top: 15px;
  background: #dc6c2e;
  display: flex;
  align-items: center;
  justify-content: center;
  gap: 7px;
  font-size: 14.500px;
  font-weight: 700;
  color: #111;
}
.review svg {
  width: 10px;
  height: 14px;
}
```
